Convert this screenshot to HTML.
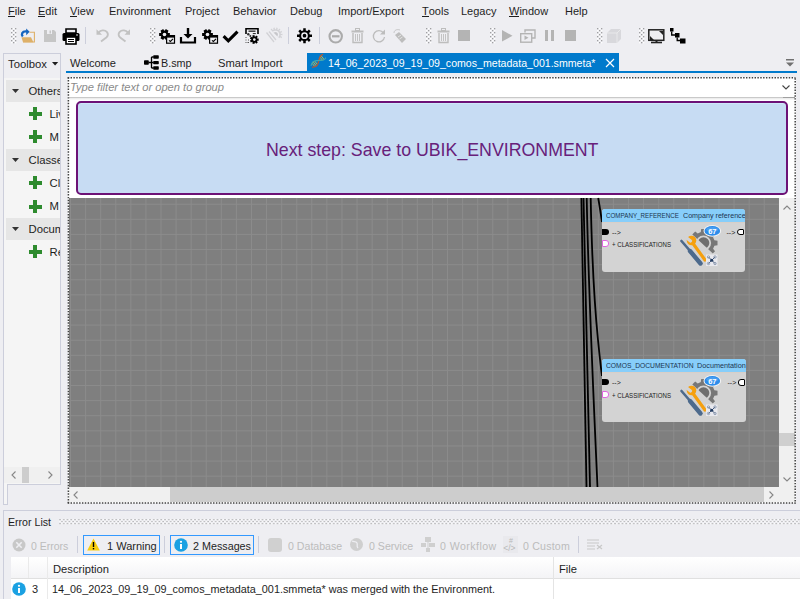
<!DOCTYPE html>
<html><head><meta charset="utf-8">
<style>
*{box-sizing:border-box;margin:0;padding:0}
html,body{width:800px;height:599px;overflow:hidden;background:#EEEEF2;font-family:"Liberation Sans",sans-serif;font-size:11px;color:#1E1E1E}
.a{position:absolute}
.t{position:absolute;white-space:pre;line-height:1}
.menu .t{top:6px;font-size:11px;color:#1E1E1E}
u{text-decoration:none;position:relative}
u:after{content:"";position:absolute;left:0;right:0;bottom:0px;height:1px;background:#1E1E1E}
svg{position:absolute;overflow:visible}
.grip{position:absolute;top:28px;width:6px;height:15px}
.sep{position:absolute;top:27px;width:1px;height:17px;background:#CCCEDB}
.plus{width:13px;height:13px;background:linear-gradient(#2E8B2E,#2E8B2E) center/4px 13px no-repeat,linear-gradient(#2E8B2E,#2E8B2E) center/13px 4px no-repeat}
.gray{color:#A2A4A5}
</style></head><body>
<!-- MENU -->
<div class="menu">
<span class="t" style="left:8px"><u>F</u>ile</span>
<span class="t" style="left:38px"><u>E</u>dit</span>
<span class="t" style="left:70px"><u>V</u>iew</span>
<span class="t" style="left:109px">Environment</span>
<span class="t" style="left:185px">Project</span>
<span class="t" style="left:233px">Behavior</span>
<span class="t" style="left:290px">Debug</span>
<span class="t" style="left:338px">Import/Export</span>
<span class="t" style="left:422px"><u>T</u>ools</span>
<span class="t" style="left:461px">Legacy</span>
<span class="t" style="left:509px"><u>W</u>indow</span>
<span class="t" style="left:565px">Help</span>
</div>

<!-- TOOLBAR -->
<svg style="left:11px;top:28px" width="6" height="16"><rect x="0" y="0" width="1.3" height="1.3" fill="#A0A0A2"/><rect x="2" y="0" width="1.3" height="1.3" fill="#FFFFFF"/><rect x="4" y="0" width="1.3" height="1.3" fill="#A0A0A2"/><rect x="0" y="2" width="1.3" height="1.3" fill="#FFFFFF"/><rect x="2" y="2" width="1.3" height="1.3" fill="#A0A0A2"/><rect x="4" y="2" width="1.3" height="1.3" fill="#FFFFFF"/><rect x="0" y="4" width="1.3" height="1.3" fill="#A0A0A2"/><rect x="2" y="4" width="1.3" height="1.3" fill="#FFFFFF"/><rect x="4" y="4" width="1.3" height="1.3" fill="#A0A0A2"/><rect x="0" y="6" width="1.3" height="1.3" fill="#FFFFFF"/><rect x="2" y="6" width="1.3" height="1.3" fill="#A0A0A2"/><rect x="4" y="6" width="1.3" height="1.3" fill="#FFFFFF"/><rect x="0" y="8" width="1.3" height="1.3" fill="#A0A0A2"/><rect x="2" y="8" width="1.3" height="1.3" fill="#FFFFFF"/><rect x="4" y="8" width="1.3" height="1.3" fill="#A0A0A2"/><rect x="0" y="10" width="1.3" height="1.3" fill="#FFFFFF"/><rect x="2" y="10" width="1.3" height="1.3" fill="#A0A0A2"/><rect x="4" y="10" width="1.3" height="1.3" fill="#FFFFFF"/><rect x="0" y="12" width="1.3" height="1.3" fill="#A0A0A2"/><rect x="2" y="12" width="1.3" height="1.3" fill="#FFFFFF"/><rect x="4" y="12" width="1.3" height="1.3" fill="#A0A0A2"/><rect x="0" y="14" width="1.3" height="1.3" fill="#FFFFFF"/><rect x="2" y="14" width="1.3" height="1.3" fill="#A0A0A2"/><rect x="4" y="14" width="1.3" height="1.3" fill="#FFFFFF"/></svg>
<!-- open folder -->
<svg style="left:18px;top:26px" width="22" height="20" viewBox="0 0 22 20">
<path d="M11.5 6.3H16.4V16H5" fill="none" stroke="#DEB068" stroke-width="1.1"/>
<path d="M3.5 11.2H13L15.4 16.2H5z" fill="#DEB068"/>
<path d="M4.8 10.6C2.8 8.2 4.4 5.4 7.6 5.4H9" fill="none" stroke="#1565C0" stroke-width="2.3"/>
<path d="M8.2 2.4L11.6 5.8 8.2 9.2z" fill="#1565C0"/>
</svg>
<!-- save gray -->
<svg style="left:44px;top:30px" width="12" height="12" viewBox="0 0 12 12">
<path d="M0 0h10l2 2v10H0z" fill="#C6C6C6"/><rect x="3" y="0" width="5" height="4" fill="#EEEEF2"/><rect x="5.5" y="0.5" width="1.5" height="3" fill="#C6C6C6"/>
</svg>
<!-- print -->
<svg style="left:62px;top:28px" width="18" height="17" viewBox="0 0 18 17">
<path d="M4 1h10v4H4z" fill="none" stroke="#000" stroke-width="1.6"/>
<rect x="0.5" y="5" width="17" height="8" rx="1.5" fill="#000"/>
<rect x="4" y="9" width="10" height="7" fill="#fff" stroke="#000" stroke-width="1.6"/>
<rect x="6" y="11" width="6" height="1" fill="#000"/><rect x="6" y="13" width="6" height="1" fill="#000"/>
<circle cx="15" cy="7" r="0.8" fill="#fff"/>
</svg>
<div class="sep" style="left:85px"></div>
<!-- undo redo -->
<svg style="left:92px;top:26px" width="42" height="20" viewBox="0 0 42 20"><path d="M4.5,3.3000000000000007 L4.5,8.799999999999997 L10,8.799999999999997Z" fill="#C2C2C2"/>
<path d="M6.599999999999994,6.600000000000001 C8.5,4.199999999999999 12.5,3.3999999999999986 14.799999999999997,5.800000000000001 C16.599999999999994,7.799999999999997 16,10.200000000000003 14.299999999999997,11.600000000000001 L9,15.600000000000001" fill="none" stroke="#C2C2C2" stroke-width="1.9"/><path d="M38.0,3.3000000000000007 L38.0,8.799999999999997 L32.5,8.799999999999997Z" fill="#C2C2C2"/>
<path d="M35.900000000000006,6.600000000000001 C34.0,4.199999999999999 30.0,3.3999999999999986 27.700000000000003,5.800000000000001 C25.900000000000006,7.799999999999997 26.5,10.200000000000003 28.200000000000003,11.600000000000001 L33.5,15.600000000000001" fill="none" stroke="#C2C2C2" stroke-width="1.9"/></svg>
<svg style="left:150px;top:28px" width="6" height="16"><rect x="0" y="0" width="1.3" height="1.3" fill="#A0A0A2"/><rect x="2" y="0" width="1.3" height="1.3" fill="#FFFFFF"/><rect x="4" y="0" width="1.3" height="1.3" fill="#A0A0A2"/><rect x="0" y="2" width="1.3" height="1.3" fill="#FFFFFF"/><rect x="2" y="2" width="1.3" height="1.3" fill="#A0A0A2"/><rect x="4" y="2" width="1.3" height="1.3" fill="#FFFFFF"/><rect x="0" y="4" width="1.3" height="1.3" fill="#A0A0A2"/><rect x="2" y="4" width="1.3" height="1.3" fill="#FFFFFF"/><rect x="4" y="4" width="1.3" height="1.3" fill="#A0A0A2"/><rect x="0" y="6" width="1.3" height="1.3" fill="#FFFFFF"/><rect x="2" y="6" width="1.3" height="1.3" fill="#A0A0A2"/><rect x="4" y="6" width="1.3" height="1.3" fill="#FFFFFF"/><rect x="0" y="8" width="1.3" height="1.3" fill="#A0A0A2"/><rect x="2" y="8" width="1.3" height="1.3" fill="#FFFFFF"/><rect x="4" y="8" width="1.3" height="1.3" fill="#A0A0A2"/><rect x="0" y="10" width="1.3" height="1.3" fill="#FFFFFF"/><rect x="2" y="10" width="1.3" height="1.3" fill="#A0A0A2"/><rect x="4" y="10" width="1.3" height="1.3" fill="#FFFFFF"/><rect x="0" y="12" width="1.3" height="1.3" fill="#A0A0A2"/><rect x="2" y="12" width="1.3" height="1.3" fill="#FFFFFF"/><rect x="4" y="12" width="1.3" height="1.3" fill="#A0A0A2"/><rect x="0" y="14" width="1.3" height="1.3" fill="#FFFFFF"/><rect x="2" y="14" width="1.3" height="1.3" fill="#A0A0A2"/><rect x="4" y="14" width="1.3" height="1.3" fill="#FFFFFF"/></svg>
<!-- gear + checkbox -->
<svg style="left:158px;top:28px" width="18" height="17" viewBox="0 0 18 17">
<g transform="translate(6.5,6.5)"><path d="M3.66,-1.62 L5.37,-1.59 L5.37,1.59 L3.66,1.62 L3.23,2.36 L4.06,3.85 L1.31,5.45 L0.42,3.98 L-0.42,3.98 L-1.31,5.45 L-4.06,3.85 L-3.23,2.36 L-3.66,1.62 L-5.37,1.59 L-5.37,-1.59 L-3.66,-1.62 L-3.23,-2.36 L-4.06,-3.85 L-1.31,-5.45 L-0.42,-3.98 L0.42,-3.98 L1.31,-5.45 L4.06,-3.85 L3.23,-2.36Z" fill="#000"/><circle r="1.8" fill="#EEEEF2"/></g>
<rect x="8.6" y="7.6" width="7.9" height="7.6" fill="#EEEEF2" stroke="#000" stroke-width="1.2"/>
<rect x="8.6" y="7.6" width="7.9" height="2" fill="#000"/>
<path d="M11 12.3l1.4 1.2 2.6-2.6" fill="none" stroke="#000" stroke-width="1.1"/>
</svg>
<!-- download -->
<svg style="left:180px;top:28px" width="16" height="16" viewBox="0 0 16 16">
<path d="M8 0v8" stroke="#000" stroke-width="2.4"/><path d="M3.5 6h9L8 10.5z" fill="#000"/>
<path d="M1 9v5.5h14V9" fill="none" stroke="#000" stroke-width="2.2"/>
</svg>
<svg style="left:201px;top:28px" width="18" height="17" viewBox="0 0 18 17">
<g transform="translate(6.5,6.5)"><path d="M3.66,-1.62 L5.37,-1.59 L5.37,1.59 L3.66,1.62 L3.23,2.36 L4.06,3.85 L1.31,5.45 L0.42,3.98 L-0.42,3.98 L-1.31,5.45 L-4.06,3.85 L-3.23,2.36 L-3.66,1.62 L-5.37,1.59 L-5.37,-1.59 L-3.66,-1.62 L-3.23,-2.36 L-4.06,-3.85 L-1.31,-5.45 L-0.42,-3.98 L0.42,-3.98 L1.31,-5.45 L4.06,-3.85 L3.23,-2.36Z" fill="#000"/><circle r="1.8" fill="#EEEEF2"/></g>
<rect x="8.6" y="7.6" width="7.9" height="7.6" fill="#EEEEF2" stroke="#000" stroke-width="1.2"/>
<rect x="8.6" y="7.6" width="7.9" height="2" fill="#000"/>
<path d="M11 12.3l1.4 1.2 2.6-2.6" fill="none" stroke="#000" stroke-width="1.1"/>
</svg>
<!-- check -->
<svg style="left:222px;top:30px" width="17" height="13" viewBox="0 0 17 13">
<path d="M1.6 6.2L6.3 10.8L15.5 1.6" fill="none" stroke="#000" stroke-width="3.1"/>
</svg>
<!-- doc with gear -->
<svg style="left:245px;top:28px" width="14" height="16" viewBox="0 0 14 16">
<path d="M1 6V0.8h12V6" fill="none" stroke="#000" stroke-width="1.6"/>
<rect x="3.5" y="2.6" width="7" height="1.1" fill="#000"/>
<circle cx="3.3" cy="6.3" r="1.2" fill="#333"/><circle cx="5.3" cy="8" r="1" fill="#333"/><rect x="7.8" y="5" width="3" height="1.1" fill="#333"/>
<rect x="0.5" y="9" width="1" height="1" fill="#555"/><rect x="0.5" y="11.5" width="1" height="1" fill="#555"/><rect x="0.5" y="14" width="1" height="1" fill="#555"/><rect x="2.5" y="14" width="1.5" height="1" fill="#555"/><rect x="3" y="11.5" width="1" height="1" fill="#555"/>
<path d="M12.20,10.51 L13.66,10.50 L13.66,12.70 L12.20,12.69 L11.96,13.19 L12.88,14.33 L11.16,15.70 L10.26,14.55 L9.71,14.67 L9.40,16.10 L7.26,15.61 L7.60,14.19 L7.16,13.84 L5.85,14.48 L4.89,12.50 L6.21,11.88 L6.21,11.32 L4.89,10.70 L5.85,8.72 L7.16,9.36 L7.60,9.01 L7.26,7.59 L9.40,7.10 L9.71,8.53 L10.26,8.65 L11.16,7.50 L12.88,8.87 L11.96,10.01Z" fill="#000"/><circle cx="9.3" cy="11.6" r="1.3" fill="#EEEEF2"/>
</svg>
<!-- gray tool -->
<svg style="left:265px;top:28px" width="17" height="15" viewBox="0 0 17 15">
<path d="M5.55,1.55 L6.78,0.57 L7.63,1.93 L8.72,1.40 L8.19,-0.11 L9.72,-0.46 L9.90,1.13 L11.10,1.13 L11.28,-0.46 L12.81,-0.11 L12.28,1.40 L13.37,1.93 L14.22,0.57 L15.45,1.55 L14.32,2.68 L15.07,3.63 L16.43,2.78 L17.11,4.19 L15.60,4.72 L15.87,5.90 L17.46,5.72 L17.46,7.28 L15.87,7.10 L15.60,8.28 L17.11,8.81 L16.43,10.22 L15.07,9.37 L14.32,10.32Z" fill="#D2D2D6"/>
<path d="M7.81,3.81 L8.39,3.34 L9.05,2.99 L9.76,2.77 L10.50,2.70 L11.24,2.77 L11.95,2.99 L12.61,3.34 L13.19,3.81 L13.66,4.39 L14.01,5.05 L14.23,5.76 L14.30,6.50 L14.23,7.24 L14.01,7.95 L13.66,8.61 L13.19,9.19Z" fill="#EEEEF2"/>
<path d="M8.80,4.80 L9.17,4.50 L9.58,4.28 L10.03,4.15 L10.50,4.10 L10.97,4.15 L11.42,4.28 L11.83,4.50 L12.20,4.80 L12.50,5.17 L12.72,5.58 L12.85,6.03 L12.90,6.50 L12.85,6.97 L12.72,7.42 L12.50,7.83 L12.20,8.20Z" fill="#C6C6CA"/>
<path d="M1.5 4.5l7.5 9.5M4 3.5l7 8.5" stroke="#D2D2D6" stroke-width="1.3"/>
</svg>
<div class="sep" style="left:288px"></div>
<!-- gear black -->
<svg style="left:297px;top:28px" width="16" height="16" viewBox="0 0 16 16"><path d="M12.75,6.42 L15.00,6.45 L15.00,8.95 L12.75,8.98 L12.11,10.51 L13.68,12.12 L11.92,13.88 L10.31,12.31 L8.78,12.95 L8.75,15.20 L6.25,15.20 L6.22,12.95 L4.69,12.31 L3.08,13.88 L1.32,12.12 L2.89,10.51 L2.25,8.98 L0.00,8.95 L0.00,6.45 L2.25,6.42 L2.89,4.89 L1.32,3.28 L3.08,1.52 L4.69,3.09 L6.22,2.45 L6.25,0.20 L8.75,0.20 L8.78,2.45 L10.31,3.09 L11.92,1.52 L13.68,3.28 L12.11,4.89Z" fill="#000"/><circle cx="7.5" cy="7.7" r="2.6" fill="none" stroke="#EEEEF2" stroke-width="1.5"/></svg>
<div class="sep" style="left:319px"></div>
<!-- minus circle -->
<svg style="left:328px;top:29px" width="16" height="15" viewBox="0 0 16 15">
<circle cx="7.7" cy="7.3" r="6.2" fill="none" stroke="#ABABAB" stroke-width="2.1"/>
<rect x="4" y="6.2" width="7.5" height="2.2" fill="#ABABAB"/>
</svg>
<!-- trash -->
<svg style="left:351px;top:28px" width="13" height="16" viewBox="0 0 13 16">
<rect x="4.5" y="0.5" width="4" height="2" fill="none" stroke="#BDBDBD" stroke-width="1"/>
<rect x="0.5" y="2.5" width="12" height="2" fill="#BDBDBD"/>
<path d="M2 5v9.5h9V5" fill="none" stroke="#BDBDBD" stroke-width="1.4"/>
<path d="M4.5 6v7M6.5 6v7M8.5 6v7" stroke="#BDBDBD" stroke-width="0.9"/>
</svg>
<!-- refresh -->
<svg style="left:372px;top:29px" width="14" height="14" viewBox="0 0 14 14">
<path d="M11.5 4A5.6 5.6 0 1 0 12.5 8" fill="none" stroke="#BDBDBD" stroke-width="1.3"/>
<path d="M13 0.5v5h-5z" fill="#BDBDBD"/>
</svg>
<!-- tag -->
<svg style="left:393px;top:28px" width="14" height="16" viewBox="0 0 14 16">
<path d="M1 5c0-3 3-4 6-3" fill="none" stroke="#BDBDBD" stroke-width="0.8"/>
<path d="M2 7l4-3 7 7-4 4z" fill="#BDBDBD"/>
<path d="M5 9l3-2M6.5 11l3-2" stroke="#EEE" stroke-width="0.8"/>
</svg>
<svg style="left:426px;top:28px" width="6" height="16"><rect x="0" y="0" width="1.3" height="1.3" fill="#A0A0A2"/><rect x="2" y="0" width="1.3" height="1.3" fill="#FFFFFF"/><rect x="4" y="0" width="1.3" height="1.3" fill="#A0A0A2"/><rect x="0" y="2" width="1.3" height="1.3" fill="#FFFFFF"/><rect x="2" y="2" width="1.3" height="1.3" fill="#A0A0A2"/><rect x="4" y="2" width="1.3" height="1.3" fill="#FFFFFF"/><rect x="0" y="4" width="1.3" height="1.3" fill="#A0A0A2"/><rect x="2" y="4" width="1.3" height="1.3" fill="#FFFFFF"/><rect x="4" y="4" width="1.3" height="1.3" fill="#A0A0A2"/><rect x="0" y="6" width="1.3" height="1.3" fill="#FFFFFF"/><rect x="2" y="6" width="1.3" height="1.3" fill="#A0A0A2"/><rect x="4" y="6" width="1.3" height="1.3" fill="#FFFFFF"/><rect x="0" y="8" width="1.3" height="1.3" fill="#A0A0A2"/><rect x="2" y="8" width="1.3" height="1.3" fill="#FFFFFF"/><rect x="4" y="8" width="1.3" height="1.3" fill="#A0A0A2"/><rect x="0" y="10" width="1.3" height="1.3" fill="#FFFFFF"/><rect x="2" y="10" width="1.3" height="1.3" fill="#A0A0A2"/><rect x="4" y="10" width="1.3" height="1.3" fill="#FFFFFF"/><rect x="0" y="12" width="1.3" height="1.3" fill="#A0A0A2"/><rect x="2" y="12" width="1.3" height="1.3" fill="#FFFFFF"/><rect x="4" y="12" width="1.3" height="1.3" fill="#A0A0A2"/><rect x="0" y="14" width="1.3" height="1.3" fill="#FFFFFF"/><rect x="2" y="14" width="1.3" height="1.3" fill="#A0A0A2"/><rect x="4" y="14" width="1.3" height="1.3" fill="#FFFFFF"/></svg>
<svg style="left:437px;top:28px" width="13" height="16" viewBox="0 0 13 16">
<rect x="4.5" y="0.5" width="4" height="2" fill="none" stroke="#BDBDBD" stroke-width="1"/>
<rect x="0.5" y="2.5" width="12" height="2" fill="#BDBDBD"/>
<path d="M2 5v9.5h9V5" fill="none" stroke="#BDBDBD" stroke-width="1.4"/>
<path d="M4.5 6v7M6.5 6v7M8.5 6v7" stroke="#BDBDBD" stroke-width="0.9"/>
</svg>
<div class="a" style="left:458px;top:30px;width:12px;height:11px;background:#B4B4B4"></div>
<svg style="left:490px;top:28px" width="6" height="16"><rect x="0" y="0" width="1.3" height="1.3" fill="#A0A0A2"/><rect x="2" y="0" width="1.3" height="1.3" fill="#FFFFFF"/><rect x="4" y="0" width="1.3" height="1.3" fill="#A0A0A2"/><rect x="0" y="2" width="1.3" height="1.3" fill="#FFFFFF"/><rect x="2" y="2" width="1.3" height="1.3" fill="#A0A0A2"/><rect x="4" y="2" width="1.3" height="1.3" fill="#FFFFFF"/><rect x="0" y="4" width="1.3" height="1.3" fill="#A0A0A2"/><rect x="2" y="4" width="1.3" height="1.3" fill="#FFFFFF"/><rect x="4" y="4" width="1.3" height="1.3" fill="#A0A0A2"/><rect x="0" y="6" width="1.3" height="1.3" fill="#FFFFFF"/><rect x="2" y="6" width="1.3" height="1.3" fill="#A0A0A2"/><rect x="4" y="6" width="1.3" height="1.3" fill="#FFFFFF"/><rect x="0" y="8" width="1.3" height="1.3" fill="#A0A0A2"/><rect x="2" y="8" width="1.3" height="1.3" fill="#FFFFFF"/><rect x="4" y="8" width="1.3" height="1.3" fill="#A0A0A2"/><rect x="0" y="10" width="1.3" height="1.3" fill="#FFFFFF"/><rect x="2" y="10" width="1.3" height="1.3" fill="#A0A0A2"/><rect x="4" y="10" width="1.3" height="1.3" fill="#FFFFFF"/><rect x="0" y="12" width="1.3" height="1.3" fill="#A0A0A2"/><rect x="2" y="12" width="1.3" height="1.3" fill="#FFFFFF"/><rect x="4" y="12" width="1.3" height="1.3" fill="#A0A0A2"/><rect x="0" y="14" width="1.3" height="1.3" fill="#FFFFFF"/><rect x="2" y="14" width="1.3" height="1.3" fill="#A0A0A2"/><rect x="4" y="14" width="1.3" height="1.3" fill="#FFFFFF"/></svg>
<svg style="left:502px;top:30px" width="11" height="12" viewBox="0 0 11 12"><path d="M0 0l10.5 5.8L0 11.6z" fill="#B4B4B4"/></svg>
<svg style="left:520px;top:29px" width="16" height="14" viewBox="0 0 16 14">
<path d="M5 3.5V1h10v8h-3" fill="none" stroke="#B4B4B4" stroke-width="1.4"/>
<rect x="0.7" y="4.7" width="11" height="8.5" fill="#EEEEF2" stroke="#B4B4B4" stroke-width="1.4"/>
<path d="M4.5 6.5l4 2.3-4 2.3z" fill="#B4B4B4"/>
</svg>
<div class="a" style="left:545px;top:30px;width:3px;height:11px;background:#B4B4B4"></div>
<div class="a" style="left:551px;top:30px;width:3px;height:11px;background:#B4B4B4"></div>
<div class="a" style="left:565px;top:30px;width:11px;height:11px;background:#B4B4B4"></div>
<svg style="left:597px;top:28px" width="6" height="16"><rect x="0" y="0" width="1.3" height="1.3" fill="#A0A0A2"/><rect x="2" y="0" width="1.3" height="1.3" fill="#FFFFFF"/><rect x="4" y="0" width="1.3" height="1.3" fill="#A0A0A2"/><rect x="0" y="2" width="1.3" height="1.3" fill="#FFFFFF"/><rect x="2" y="2" width="1.3" height="1.3" fill="#A0A0A2"/><rect x="4" y="2" width="1.3" height="1.3" fill="#FFFFFF"/><rect x="0" y="4" width="1.3" height="1.3" fill="#A0A0A2"/><rect x="2" y="4" width="1.3" height="1.3" fill="#FFFFFF"/><rect x="4" y="4" width="1.3" height="1.3" fill="#A0A0A2"/><rect x="0" y="6" width="1.3" height="1.3" fill="#FFFFFF"/><rect x="2" y="6" width="1.3" height="1.3" fill="#A0A0A2"/><rect x="4" y="6" width="1.3" height="1.3" fill="#FFFFFF"/><rect x="0" y="8" width="1.3" height="1.3" fill="#A0A0A2"/><rect x="2" y="8" width="1.3" height="1.3" fill="#FFFFFF"/><rect x="4" y="8" width="1.3" height="1.3" fill="#A0A0A2"/><rect x="0" y="10" width="1.3" height="1.3" fill="#FFFFFF"/><rect x="2" y="10" width="1.3" height="1.3" fill="#A0A0A2"/><rect x="4" y="10" width="1.3" height="1.3" fill="#FFFFFF"/><rect x="0" y="12" width="1.3" height="1.3" fill="#A0A0A2"/><rect x="2" y="12" width="1.3" height="1.3" fill="#FFFFFF"/><rect x="4" y="12" width="1.3" height="1.3" fill="#A0A0A2"/><rect x="0" y="14" width="1.3" height="1.3" fill="#FFFFFF"/><rect x="2" y="14" width="1.3" height="1.3" fill="#A0A0A2"/><rect x="4" y="14" width="1.3" height="1.3" fill="#FFFFFF"/></svg>
<svg style="left:607px;top:29px" width="14" height="14" viewBox="0 0 14 14">
<path d="M4 0h10v10l-4 4H0V4z" fill="#D8D8DC"/><path d="M0 4h10v10M10 4l4-4" fill="none" stroke="#EEE" stroke-width="0.8"/>
</svg>
<svg style="left:639px;top:28px" width="6" height="16"><rect x="0" y="0" width="1.3" height="1.3" fill="#A0A0A2"/><rect x="2" y="0" width="1.3" height="1.3" fill="#FFFFFF"/><rect x="4" y="0" width="1.3" height="1.3" fill="#A0A0A2"/><rect x="0" y="2" width="1.3" height="1.3" fill="#FFFFFF"/><rect x="2" y="2" width="1.3" height="1.3" fill="#A0A0A2"/><rect x="4" y="2" width="1.3" height="1.3" fill="#FFFFFF"/><rect x="0" y="4" width="1.3" height="1.3" fill="#A0A0A2"/><rect x="2" y="4" width="1.3" height="1.3" fill="#FFFFFF"/><rect x="4" y="4" width="1.3" height="1.3" fill="#A0A0A2"/><rect x="0" y="6" width="1.3" height="1.3" fill="#FFFFFF"/><rect x="2" y="6" width="1.3" height="1.3" fill="#A0A0A2"/><rect x="4" y="6" width="1.3" height="1.3" fill="#FFFFFF"/><rect x="0" y="8" width="1.3" height="1.3" fill="#A0A0A2"/><rect x="2" y="8" width="1.3" height="1.3" fill="#FFFFFF"/><rect x="4" y="8" width="1.3" height="1.3" fill="#A0A0A2"/><rect x="0" y="10" width="1.3" height="1.3" fill="#FFFFFF"/><rect x="2" y="10" width="1.3" height="1.3" fill="#A0A0A2"/><rect x="4" y="10" width="1.3" height="1.3" fill="#FFFFFF"/><rect x="0" y="12" width="1.3" height="1.3" fill="#A0A0A2"/><rect x="2" y="12" width="1.3" height="1.3" fill="#FFFFFF"/><rect x="4" y="12" width="1.3" height="1.3" fill="#A0A0A2"/><rect x="0" y="14" width="1.3" height="1.3" fill="#FFFFFF"/><rect x="2" y="14" width="1.3" height="1.3" fill="#A0A0A2"/><rect x="4" y="14" width="1.3" height="1.3" fill="#FFFFFF"/></svg>
<!-- monitor -->
<svg style="left:648px;top:29px" width="17" height="15" viewBox="0 0 17 15">
<rect x="0.8" y="0.8" width="15" height="10.5" fill="#EEEEF2" stroke="#222" stroke-width="1.5"/>
<path d="M11 2h4v4zM2 7l4 4H2z" fill="#222"/>
<path d="M3 13.5h11" stroke="#222" stroke-width="1.6"/><rect x="7.5" y="11" width="2" height="2" fill="#222"/>
</svg>
<!-- hierarchy -->
<svg style="left:670px;top:28px" width="16" height="16" viewBox="0 0 16 16">
<rect x="0" y="0" width="3.5" height="3.5" fill="#000"/><rect x="5" y="5" width="4.5" height="4.5" fill="#000"/><rect x="10" y="10.5" width="5.5" height="5" fill="#000"/>
<path d="M1.7 3.5v3.5h3.5M7.2 9.5v3h3" fill="none" stroke="#000" stroke-width="1.3"/>
</svg>


<!-- TOOLBOX PANEL -->
<div class="a" style="left:3px;top:53px;width:58px;height:432px;border:1px solid #CCCEDB;background:#F5F5F5"></div>
<div class="a" style="left:4px;top:54px;width:56px;height:23.5px;background:#EEEEF2"></div>
<div class="a" style="left:3px;top:484px;width:5px;height:21px;border:1px solid #CCCEDB;border-top:none;background:#F5F5F5"></div>
<div class="a" style="left:4px;top:483px;width:3px;height:2px;background:#F5F5F5"></div>
<span class="t" style="left:8px;top:59.4px;font-size:11.3px;color:#1E1E1E">Toolbox</span>
<svg style="left:52px;top:61.5px" width="6" height="4" viewBox="0 0 6 4"><path d="M0 0h6.2L3.1 3.6z" fill="#1E1E1E"/></svg>
<!-- groups -->
<div class="a" style="left:6px;top:80px;width:54px;height:22px;background:#E6E6E6"></div>
<div class="a" style="left:6px;top:149px;width:54px;height:22px;background:#E6E6E6"></div>
<div class="a" style="left:6px;top:218px;width:54px;height:22px;background:#E6E6E6"></div>
<div class="a" style="left:6px;top:80px;width:53.5px;height:200px;overflow:hidden">
 <svg style="left:5.5px;top:9px" width="7" height="4" viewBox="0 0 7 4"><path d="M0 0h7L3.5 4z" fill="#333"/></svg>
 <span class="t" style="left:22.5px;top:6px;font-size:11.3px">Others</span>
 <svg style="left:5.5px;top:78px" width="7" height="4" viewBox="0 0 7 4"><path d="M0 0h7L3.5 4z" fill="#333"/></svg>
 <span class="t" style="left:22.5px;top:75px;font-size:11.3px">Classes</span>
 <svg style="left:5.5px;top:147px" width="7" height="4" viewBox="0 0 7 4"><path d="M0 0h7L3.5 4z" fill="#333"/></svg>
 <span class="t" style="left:22.5px;top:144px;font-size:11.3px">Documents</span>
 <span class="t" style="left:43.5px;top:29px;font-size:11.3px">Live</span>
 <span class="t" style="left:43.5px;top:52px;font-size:11.3px">M</span>
 <span class="t" style="left:43.5px;top:98px;font-size:11.3px">Class</span>
 <span class="t" style="left:43.5px;top:121px;font-size:11.3px">M</span>
 <span class="t" style="left:43.5px;top:167px;font-size:11.3px">Rel</span>
 <div class="a plus" style="left:22.5px;top:27px"></div>
 <div class="a plus" style="left:22.5px;top:50px"></div>
 <div class="a plus" style="left:22.5px;top:96px"></div>
 <div class="a plus" style="left:22.5px;top:120px"></div>
 <div class="a plus" style="left:22.5px;top:165px"></div>
</div>
<!-- scrollbar -->
<div class="a" style="left:4px;top:467px;width:56px;height:16px;background:#F0F0F0"></div>
<div class="a" style="left:22px;top:467px;width:7px;height:16px;background:#CDCDCD"></div>
<svg style="left:11px;top:471px" width="5" height="8" viewBox="0 0 5 8"><path d="M4.5 0.5L1 4l3.5 3.5" fill="none" stroke="#868686" stroke-width="1.1"/></svg>
<svg style="left:48px;top:471px" width="5" height="8" viewBox="0 0 5 8"><path d="M0.5 0.5L4 4 0.5 7.5" fill="none" stroke="#868686" stroke-width="1.1"/></svg>


<!-- TABS -->
<span class="t" style="left:70px;top:58px;font-size:11.1px">Welcome</span>
<svg style="left:144px;top:55px" width="16" height="15" viewBox="0 0 16 15">
<rect x="0" y="5.3" width="4.8" height="4.4" rx="0.8" fill="#000"/><rect x="9.2" y="0.3" width="5.6" height="3.4" rx="0.8" fill="#000"/><rect x="9.2" y="6" width="5.6" height="3.2" rx="0.8" fill="#000"/><rect x="9.2" y="11.3" width="5.6" height="3.4" rx="0.8" fill="#000"/>
<path d="M4.5 7.5h5M7.5 2v11M7.5 2h2M7.5 13h2" fill="none" stroke="#000" stroke-width="1.3"/>
</svg>
<span class="t" style="left:161px;top:58px;font-size:10.8px">B.smp</span>
<span class="t" style="left:218px;top:58px;font-size:11.2px">Smart Import</span>
<div class="a" style="left:307px;top:53px;width:312px;height:20px;background:#007ACC"></div>
<svg style="left:305px;top:52px" width="30" height="22" viewBox="0 0 30 22"><path d="M9.87,14.68 L7.03,11.17" stroke="#D8C040" stroke-width="0.9"/><path d="M11.38,13.90 L8.12,9.85" stroke="#D8C040" stroke-width="0.9"/><path d="M12.49,12.61 L9.61,9.04" stroke="#D8C040" stroke-width="0.9"/><path d="M14.28,6.84 L15.62,8.51" stroke="#D8C040" stroke-width="0.9"/><path d="M14.94,5.01 L17.56,8.24" stroke="#D8C040" stroke-width="0.9"/><path d="M15.93,3.57 L19.17,7.58" stroke="#D8C040" stroke-width="0.9"/><path d="M6.98,15.10 L8.01,15.03 L8.97,14.90 L9.87,14.68 L10.68,14.35 L11.38,13.90 L11.99,13.32 L12.49,12.61 L12.91,11.79 L13.24,10.88 L13.53,9.90 L13.78,8.88 L14.02,7.85 L14.28,6.84 L14.58,5.88 L14.94,5.01 L15.39,4.23 L15.93,3.57 L16.58,3.04 L17.32,2.63 L18.16,2.35" fill="none" stroke="#B85A30" stroke-width="1.3"/><path d="M6.02,13.90 L6.29,12.92 L6.63,12.00 L7.03,11.17 L7.52,10.45 L8.12,9.85 L8.81,9.38 L9.61,9.04 L10.49,8.81 L11.46,8.67 L12.47,8.60 L13.52,8.57 L14.58,8.55 L15.62,8.51 L16.62,8.42 L17.56,8.24 L18.41,7.97 L19.17,7.58 L19.82,7.06 L20.38,6.42 L20.84,5.65" fill="none" stroke="#40A8B0" stroke-width="1.1"/></svg>
<span class="t" style="left:328px;top:58px;font-size:10.6px;color:#fff">14_06_2023_09_19_09_comos_metadata_001.smmeta*</span>
<svg style="left:605px;top:58px" width="10" height="10" viewBox="0 0 10 10"><path d="M1 1l8 8M9 1L1 9" stroke="#fff" stroke-width="1.2"/></svg>
<div class="a" style="left:66px;top:71px;width:731px;height:2px;background:#007ACC"></div>
<svg style="left:786px;top:59px" width="9" height="9" viewBox="0 0 9 9"><rect x="0" y="0" width="8" height="1.5" fill="#717171"/><path d="M0 3.5h8L4 7.5z" fill="#717171"/></svg>


<!-- DOCUMENT -->
<div class="a" style="left:68px;top:77px;width:728px;height:426px;background:#fff"></div>
<span class="t" style="left:70px;top:82.3px;font-style:italic;font-size:11.15px;color:#8A8A8A">Type filter text or open to group</span>
<div class="a" style="left:69px;top:97px;width:714px;height:1px;background:#C9C9C9"></div>
<div class="a" style="left:783px;top:97px;width:12px;height:1px;background:#A0A0A0"></div>
<svg style="left:782px;top:85px" width="8" height="5" viewBox="0 0 8 5"><path d="M0.5 0.5L4 4l3.5-3.5" fill="none" stroke="#444" stroke-width="1.1"/></svg>
<div class="a" style="left:69px;top:98px;width:726px;height:1px;background:#EDEDED"></div>
<div class="a" style="left:69px;top:99px;width:726px;height:1px;background:#F7F7F7"></div>
<div class="a" style="left:75.5px;top:101px;width:712px;height:94px;border:2px solid #6D1276;border-radius:5px;background:#C7DCF3;box-shadow:inset 0 1px 0 #CFE8FA"></div>
<span class="t" style="left:266px;top:142.3px;font-size:17.75px;color:#68217A">Next step: Save to UBIK_ENVIRONMENT</span>
<!-- canvas -->
<div class="a" style="left:69px;top:198px;width:710px;height:289px;background:#7F7F7F;overflow:hidden">
<svg id="grid" style="left:0;top:0" width="710" height="289"><g fill="#8C8C8C"><rect x="1.02" y="0" width="1" height="289"/><rect x="16.10" y="0" width="1" height="289"/><rect x="31.18" y="0" width="1" height="289"/><rect x="46.26" y="0" width="1" height="289"/><rect x="61.34" y="0" width="1" height="289"/><rect x="76.42" y="0" width="1" height="289"/><rect x="91.50" y="0" width="1" height="289"/><rect x="106.58" y="0" width="1" height="289"/><rect x="121.66" y="0" width="1" height="289"/><rect x="136.74" y="0" width="1" height="289"/><rect x="151.82" y="0" width="1" height="289"/><rect x="166.90" y="0" width="1" height="289"/><rect x="181.98" y="0" width="1" height="289"/><rect x="197.06" y="0" width="1" height="289"/><rect x="212.14" y="0" width="1" height="289"/><rect x="227.22" y="0" width="1" height="289"/><rect x="242.30" y="0" width="1" height="289"/><rect x="257.38" y="0" width="1" height="289"/><rect x="272.46" y="0" width="1" height="289"/><rect x="287.54" y="0" width="1" height="289"/><rect x="302.62" y="0" width="1" height="289"/><rect x="317.70" y="0" width="1" height="289"/><rect x="332.78" y="0" width="1" height="289"/><rect x="347.86" y="0" width="1" height="289"/><rect x="362.94" y="0" width="1" height="289"/><rect x="378.02" y="0" width="1" height="289"/><rect x="393.10" y="0" width="1" height="289"/><rect x="408.18" y="0" width="1" height="289"/><rect x="423.26" y="0" width="1" height="289"/><rect x="438.34" y="0" width="1" height="289"/><rect x="453.42" y="0" width="1" height="289"/><rect x="468.50" y="0" width="1" height="289"/><rect x="483.58" y="0" width="1" height="289"/><rect x="498.66" y="0" width="1" height="289"/><rect x="513.74" y="0" width="1" height="289"/><rect x="528.82" y="0" width="1" height="289"/><rect x="543.90" y="0" width="1" height="289"/><rect x="558.98" y="0" width="1" height="289"/><rect x="574.06" y="0" width="1" height="289"/><rect x="589.14" y="0" width="1" height="289"/><rect x="604.22" y="0" width="1" height="289"/><rect x="619.30" y="0" width="1" height="289"/><rect x="634.38" y="0" width="1" height="289"/><rect x="649.46" y="0" width="1" height="289"/><rect x="664.54" y="0" width="1" height="289"/><rect x="679.62" y="0" width="1" height="289"/><rect x="694.70" y="0" width="1" height="289"/><rect x="709.78" y="0" width="1" height="289"/><rect x="0" y="5.70" width="710" height="1"/><rect x="0" y="20.81" width="710" height="1"/><rect x="0" y="35.92" width="710" height="1"/><rect x="0" y="51.03" width="710" height="1"/><rect x="0" y="66.14" width="710" height="1"/><rect x="0" y="81.25" width="710" height="1"/><rect x="0" y="96.36" width="710" height="1"/><rect x="0" y="111.47" width="710" height="1"/><rect x="0" y="126.58" width="710" height="1"/><rect x="0" y="141.69" width="710" height="1"/><rect x="0" y="156.80" width="710" height="1"/><rect x="0" y="171.91" width="710" height="1"/><rect x="0" y="187.02" width="710" height="1"/><rect x="0" y="202.13" width="710" height="1"/><rect x="0" y="217.24" width="710" height="1"/><rect x="0" y="232.35" width="710" height="1"/><rect x="0" y="247.46" width="710" height="1"/><rect x="0" y="262.57" width="710" height="1"/><rect x="0" y="277.68" width="710" height="1"/></g></svg>
</div>
<!-- wires -->
<svg style="left:0;top:0" width="800" height="599">
<g fill="none" stroke="#000" stroke-width="1.8">
<path d="M581.4 198 C581.8 240 583 300 586.5 487"/>
<path d="M583.5 198 C584 240 585.5 300 590 487"/>
<path d="M586.7 198 C587.5 240 589 300 597.5 487"/>
<path d="M590.7 198 C591.5 240 594 300 598 340 C599.5 355 600.5 365 602 376"/>
<path d="M598.2 198 C599.5 205 600.5 212 602 222"/>
</g>
</svg>

<div class="a" style="left:601.5px;top:208.5px;width:143.5px;height:63px;background:#D3D3D3;border-radius:3px;overflow:hidden">
 <div class="a" style="left:0;top:0;width:144px;height:13px;background:#87CEFA"></div>
 <div class="a" style="left:0;top:13px;width:144px;height:1px;background:#D8CFC8"></div>
 <span class="t" style="left:4px;top:3.1px;font-size:7.4px;color:#1B3550;transform:scaleX(0.843);transform-origin:0 0">COMPANY_REFERENCE</span>
 <span class="t" style="left:81px;top:3.1px;font-size:7.4px;color:#1B3550;transform:scaleX(0.965);transform-origin:0 0">Company reference</span>
 <div class="a" style="left:0;top:20.3px;width:7.5px;height:6px;background:#000;border-radius:0 3px 3px 0"></div>
 <span class="t" style="left:10.5px;top:20px;font-size:7px;color:#222">--&gt;</span>
 <div class="a" style="left:0;top:31.8px;width:7.5px;height:6.8px;background:#fff;border:1.8px solid #E066E0;border-radius:0 3px 3px 0"></div>
 <span class="t" style="left:10.5px;top:32.5px;font-size:7px;color:#222;transform:scaleX(0.87);transform-origin:0 0">+ CLASSIFICATIONS</span>
 <span class="t" style="left:125px;top:20px;font-size:7px;color:#222">--&gt;</span>
 <div class="a" style="left:135.2px;top:20.2px;width:7.6px;height:6.4px;background:#fff;border:1.7px solid #000;border-radius:3px 1px 1px 3px"></div>
 <svg style="left:0;top:0" width="146" height="63" viewBox="0 0 146 63">
  <path d="M112.38,31.35 L115.51,31.67 L115.51,36.33 L112.38,36.65 L111.07,39.82 L113.05,42.26 L109.76,45.55 L107.32,43.57 L104.15,44.88 L103.83,48.01 L99.17,48.01 L98.85,44.88 L95.68,43.57 L93.24,45.55 L89.95,42.26 L91.93,39.82 L90.62,36.65 L87.49,36.33 L87.49,31.67 L90.62,31.35 L91.93,28.18 L89.95,25.74 L93.24,22.45 L95.68,24.43 L98.85,23.12 L99.17,19.99 L103.83,19.99 L104.15,23.12 L107.32,24.43 L109.76,22.45 L113.05,25.74 L111.07,28.18Z" fill="#777777"/>
  <circle cx="101.5" cy="34.0" r="7.6" fill="#D3D3D3"/>
  <circle cx="101.5" cy="34.0" r="5.8" fill="#6E6E6E"/>
  <path d="M83.0,27.5 L111.0,53.5" stroke="#D3D3D3" stroke-width="13"/>
  <path d="M79.5,32.0 L99.0,54.5" stroke="#4D6A8C" stroke-width="2.6" stroke-linecap="round"/>
  <path d="M88.0,42.0 L98.5,54.5" stroke="#4D6A8C" stroke-width="4.4" stroke-linecap="round"/>
  <circle cx="89.5" cy="31.5" r="4.8" fill="#F5A00F"/>
  <path d="M83.5,28.0 L88.5,32.0" stroke="#D3D3D3" stroke-width="3.2" stroke-linecap="round"/>
  <path d="M91.0,34.5 L103.0,51.0" stroke="#F5A00F" stroke-width="3.2" stroke-linecap="round"/>
  <ellipse cx="110.3" cy="21.9" rx="8.8" ry="5.9" fill="#F4F4F4"/>
  <ellipse cx="110.3" cy="21.9" rx="7.8" ry="4.9" fill="#2C8CEB"/>
  <ellipse cx="110.3" cy="20.5" rx="6" ry="2.5" fill="#5AAAF5" opacity=".6"/>
  <text x="110.3" y="24.7" font-size="7.5" font-weight="bold" fill="#fff" text-anchor="middle" font-family="Liberation Sans">67</text>
  <rect x="104" y="45.5" width="11.5" height="11.5" fill="#E9E9EE"/>
  <path d="M106.5,48.0 L113.0,54.5 M113.0,48.0 L106.5,54.5" stroke="#4A5E7E" stroke-width="1"/>
  <circle cx="109.7" cy="51.3" r="1.5" fill="#1F3A60"/>
  <circle cx="106.5" cy="48.0" r="1.2" fill="none" stroke="#8090A8" stroke-width=".8"/>
  <circle cx="113.0" cy="48.0" r="1.2" fill="none" stroke="#8090A8" stroke-width=".8"/>
  <circle cx="106.5" cy="54.5" r="1.2" fill="none" stroke="#8090A8" stroke-width=".8"/>
  <circle cx="113.0" cy="54.5" r="1.2" fill="none" stroke="#8090A8" stroke-width=".8"/>
 </svg>
</div>
<div class="a" style="left:601.5px;top:359px;width:144.5px;height:63px;background:#D3D3D3;border-radius:3px;overflow:hidden">
 <div class="a" style="left:0;top:0;width:145px;height:13px;background:#87CEFA"></div>
 <div class="a" style="left:0;top:13px;width:145px;height:1px;background:#D8CFC8"></div>
 <span class="t" style="left:4px;top:3.1px;font-size:7.4px;color:#1B3550;transform:scaleX(0.91);transform-origin:0 0">COMOS_DOCUMENTATION</span>
 <span class="t" style="left:95.8px;top:3.1px;font-size:7.4px;color:#1B3550;transform:scaleX(0.98);transform-origin:0 0">Documentation</span>
 <div class="a" style="left:0;top:20.3px;width:7.5px;height:6px;background:#000;border-radius:0 3px 3px 0"></div>
 <span class="t" style="left:10.5px;top:20px;font-size:7px;color:#222">--&gt;</span>
 <div class="a" style="left:0;top:31.8px;width:7.5px;height:6.8px;background:#fff;border:1.8px solid #E066E0;border-radius:0 3px 3px 0"></div>
 <span class="t" style="left:10.5px;top:32.5px;font-size:7px;color:#222;transform:scaleX(0.87);transform-origin:0 0">+ CLASSIFICATIONS</span>
 <span class="t" style="left:126px;top:20px;font-size:7px;color:#222">--&gt;</span>
 <div class="a" style="left:136.2px;top:20.2px;width:7.6px;height:6.4px;background:#fff;border:1.7px solid #000;border-radius:3px 1px 1px 3px"></div>
 <svg style="left:0;top:0" width="146" height="63" viewBox="0 0 146 63">
  <path d="M112.38,31.35 L115.51,31.67 L115.51,36.33 L112.38,36.65 L111.07,39.82 L113.05,42.26 L109.76,45.55 L107.32,43.57 L104.15,44.88 L103.83,48.01 L99.17,48.01 L98.85,44.88 L95.68,43.57 L93.24,45.55 L89.95,42.26 L91.93,39.82 L90.62,36.65 L87.49,36.33 L87.49,31.67 L90.62,31.35 L91.93,28.18 L89.95,25.74 L93.24,22.45 L95.68,24.43 L98.85,23.12 L99.17,19.99 L103.83,19.99 L104.15,23.12 L107.32,24.43 L109.76,22.45 L113.05,25.74 L111.07,28.18Z" fill="#777777"/>
  <circle cx="101.5" cy="34.0" r="7.6" fill="#D3D3D3"/>
  <circle cx="101.5" cy="34.0" r="5.8" fill="#6E6E6E"/>
  <path d="M83.0,27.5 L111.0,53.5" stroke="#D3D3D3" stroke-width="13"/>
  <path d="M79.5,32.0 L99.0,54.5" stroke="#4D6A8C" stroke-width="2.6" stroke-linecap="round"/>
  <path d="M88.0,42.0 L98.5,54.5" stroke="#4D6A8C" stroke-width="4.4" stroke-linecap="round"/>
  <circle cx="89.5" cy="31.5" r="4.8" fill="#F5A00F"/>
  <path d="M83.5,28.0 L88.5,32.0" stroke="#D3D3D3" stroke-width="3.2" stroke-linecap="round"/>
  <path d="M91.0,34.5 L103.0,51.0" stroke="#F5A00F" stroke-width="3.2" stroke-linecap="round"/>
  <ellipse cx="110.3" cy="21.9" rx="8.8" ry="5.9" fill="#F4F4F4"/>
  <ellipse cx="110.3" cy="21.9" rx="7.8" ry="4.9" fill="#2C8CEB"/>
  <ellipse cx="110.3" cy="20.5" rx="6" ry="2.5" fill="#5AAAF5" opacity=".6"/>
  <text x="110.3" y="24.7" font-size="7.5" font-weight="bold" fill="#fff" text-anchor="middle" font-family="Liberation Sans">67</text>
  <rect x="104" y="45.5" width="11.5" height="11.5" fill="#E9E9EE"/>
  <path d="M106.5,48.0 L113.0,54.5 M113.0,48.0 L106.5,54.5" stroke="#4A5E7E" stroke-width="1"/>
  <circle cx="109.7" cy="51.3" r="1.5" fill="#1F3A60"/>
  <circle cx="106.5" cy="48.0" r="1.2" fill="none" stroke="#8090A8" stroke-width=".8"/>
  <circle cx="113.0" cy="48.0" r="1.2" fill="none" stroke="#8090A8" stroke-width=".8"/>
  <circle cx="106.5" cy="54.5" r="1.2" fill="none" stroke="#8090A8" stroke-width=".8"/>
  <circle cx="113.0" cy="54.5" r="1.2" fill="none" stroke="#8090A8" stroke-width=".8"/>
 </svg>
</div>
<!-- v scrollbar -->
<div class="a" style="left:779px;top:198px;width:16px;height:289px;background:#F0F0F0"></div>
<div class="a" style="left:779px;top:433px;width:16px;height:13px;background:#CFCFCF"></div>
<svg style="left:783px;top:205px" width="8" height="5" viewBox="0 0 8 5"><path d="M0.5 4.5L4 1l3.5 3.5" fill="none" stroke="#868686" stroke-width="1.1"/></svg>
<svg style="left:783px;top:477px" width="8" height="5" viewBox="0 0 8 5"><path d="M0.5 0.5L4 4l3.5-3.5" fill="none" stroke="#868686" stroke-width="1.1"/></svg>
<!-- h scrollbar -->
<div class="a" style="left:779px;top:487px;width:16px;height:15px;background:#F0F0F0"></div>
<div class="a" style="left:69px;top:487px;width:710px;height:15px;background:#F0F0F0"></div>
<div class="a" style="left:170px;top:487px;width:594px;height:15px;background:#CDCDCD"></div>
<svg style="left:73px;top:491px" width="5" height="8" viewBox="0 0 5 8"><path d="M4.5 0.5L1 4l3.5 3.5" fill="none" stroke="#868686" stroke-width="1.1"/></svg>
<svg style="left:769px;top:491px" width="5" height="8" viewBox="0 0 5 8"><path d="M0.5 0.5L4 4 0.5 7.5" fill="none" stroke="#868686" stroke-width="1.1"/></svg>


<svg style="left:0;top:0" width="800" height="599"><g fill="none" stroke="#404040" stroke-width="1.5" stroke-dasharray="1.45 1.4">
<path d="M67.7 77.7H795.5"/><path d="M68.4 77.2V503.5"/><path d="M795.2 78.2V503.5"/><path d="M67.7 502.9H795.5"/></g></svg>
<!-- ERROR LIST -->
<div class="a" style="left:3px;top:510px;width:797px;height:89px;border-left:1px solid #CCCEDB;border-top:1px solid #CCCEDB"></div>
<span class="t" style="left:8px;top:517px;font-size:10.6px">Error List</span>
<svg style="left:59px;top:518px" width="741" height="7"><defs><pattern id="eg" width="3.75" height="4" patternUnits="userSpaceOnUse"><rect x="0.4" y="1" width="1.2" height="1.2" fill="#A8A8AA"/><rect x="2.3" y="3" width="1.2" height="1.2" fill="#A8A8AA"/><rect x="2.3" y="1" width="1.2" height="1.2" fill="#fff"/><rect x="0.4" y="3" width="1.2" height="1.2" fill="#fff"/></pattern></defs><rect x="0" y="0" width="741" height="7" fill="url(#eg)"/></svg>
<svg style="left:12px;top:538px" width="14" height="14" viewBox="0 0 14 14"><circle cx="7" cy="7" r="6.5" fill="#C8C8C8"/><path d="M4.3 4.3l5.4 5.4M9.7 4.3l-5.4 5.4" stroke="#EEEEF2" stroke-width="1.6"/></svg>
<span class="t gray" style="left:31px;top:541px;font-size:10.5px;color:#BCBCBC">0 Errors</span>
<div class="a" style="left:77px;top:536px;width:1px;height:17px;background:#CCCEDB"></div>
<div class="a" style="left:83px;top:535px;width:77px;height:20px;border:1px solid #3399FF"></div>
<svg style="left:87px;top:538px" width="13" height="13" viewBox="0 0 13 13"><path d="M6.5 0.5L12.8 12.5H0.2z" fill="#F8CE0E"/><rect x="5.8" y="4" width="1.4" height="5" fill="#000"/><rect x="5.8" y="10" width="1.4" height="1.4" fill="#000"/></svg>
<span class="t" style="left:107px;top:541px;font-size:11px">1 Warning</span>
<div class="a" style="left:164px;top:536px;width:1px;height:17px;background:#CCCEDB"></div>
<div class="a" style="left:170px;top:535px;width:84px;height:20px;border:1px solid #3399FF"></div>
<svg style="left:174px;top:538px" width="14" height="14" viewBox="0 0 14 14"><circle cx="7" cy="7" r="6.8" fill="#1BA1E2"/><rect x="6" y="6" width="2" height="5" fill="#fff"/><circle cx="7" cy="3.8" r="1.1" fill="#fff"/></svg>
<span class="t" style="left:193px;top:541px;font-size:10.75px">2 Messages</span>
<div class="a" style="left:258px;top:536px;width:1px;height:17px;background:#CCCEDB"></div>
<svg style="left:268px;top:537px" width="14" height="16" viewBox="0 0 14 16"><rect x="0" y="1" width="14" height="14" rx="3" fill="#D0D0D0"/></svg>
<span class="t" style="left:288px;top:541px;font-size:10.6px;color:#BCBCBC">0 Database</span>
<svg style="left:349px;top:537px" width="15" height="15" viewBox="0 0 15 15"><circle cx="7.5" cy="7.5" r="6.5" fill="#CFCFCF"/><path d="M3 4c2 1 4 0 5 2s-1 3 1 5" stroke="#EEEEF2" stroke-width="1.3" fill="none"/></svg>
<span class="t" style="left:369px;top:541px;font-size:10.6px;color:#BCBCBC">0 Service</span>
<svg style="left:421px;top:537px" width="14" height="16" viewBox="0 0 14 16"><rect x="4" y="0" width="6" height="5" fill="#CFCFCF"/><rect x="0" y="6" width="5" height="4" fill="#CFCFCF"/><rect x="8" y="6" width="6" height="4" fill="#CFCFCF"/><rect x="5" y="11" width="4" height="4" fill="#CFCFCF"/><path d="M7 5v7" stroke="#CFCFCF"/></svg>
<span class="t" style="left:440px;top:541px;font-size:10.6px;color:#BCBCBC;letter-spacing:0.45px">0 Workflow</span>
<svg style="left:503px;top:536px" width="15" height="17" viewBox="0 0 15 17"><rect x="0" y="0" width="15" height="17" fill="#E9E9ED"/><text x="6" y="7" font-size="7" fill="#B8B8B8" font-family="Liberation Sans">#</text><text x="0.3" y="15" font-size="8.5" fill="#B8B8B8" font-family="Liberation Sans">&lt;/&gt;</text></svg>
<span class="t" style="left:523px;top:541px;font-size:10.6px;color:#BCBCBC;letter-spacing:0.2px">0 Custom</span>
<div class="a" style="left:578px;top:536px;width:1px;height:17px;background:#CCCEDB"></div>
<svg style="left:587px;top:539px" width="16" height="11" viewBox="0 0 16 11"><path d="M0 1h12M0 4h12M0 7h8M0 10h8" stroke="#C8C8C8" stroke-width="1.2"/><path d="M10 6l5 4M15 6l-5 4" stroke="#C8C8C8" stroke-width="1.2"/></svg>
<!-- table -->
<div class="a" style="left:11px;top:557px;width:789px;height:42px;background:#fff"></div>
<div class="a" style="left:11px;top:557px;width:789px;height:21px;background:linear-gradient(#fff,#F4F4F6)"></div>
<div class="a" style="left:11px;top:578px;width:789px;height:1px;background:#E0E0E0"></div>
<div class="a" style="left:28px;top:557px;width:1px;height:21px;background:#EAEAEA"></div>
<div class="a" style="left:47px;top:557px;width:1px;height:42px;background:#EAEAEA"></div>
<div class="a" style="left:553px;top:557px;width:1px;height:42px;background:#E4E4E4"></div>
<span class="t" style="left:53px;top:564px;font-size:11.2px">Description</span>
<span class="t" style="left:559px;top:564px;font-size:11.2px">File</span>
<svg style="left:12px;top:582px" width="14" height="14" viewBox="0 0 14 14"><circle cx="7" cy="7" r="6.8" fill="#1BA1E2"/><rect x="6" y="6" width="2" height="5" fill="#fff"/><circle cx="7" cy="3.8" r="1.1" fill="#fff"/></svg>
<span class="t" style="left:32px;top:584px;font-size:11px">3</span>
<span class="t" style="left:52px;top:584px;font-size:10.85px">14_06_2023_09_19_09_comos_metadata_001.smmeta* was merged with the Environment.</span>

</body></html>
